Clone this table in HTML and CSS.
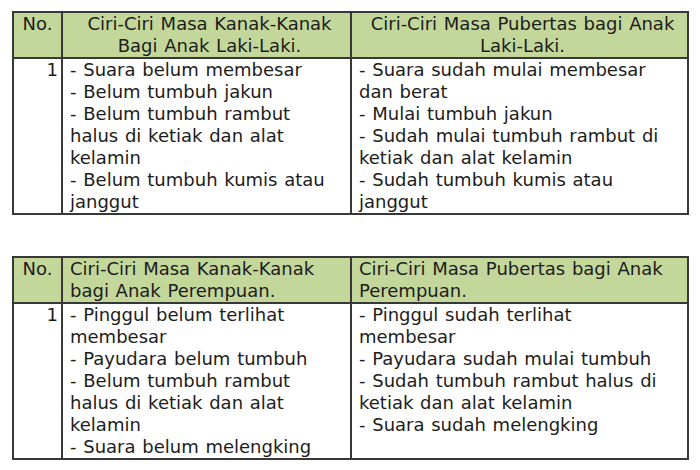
FILE: index.html
```html
<!DOCTYPE html>
<html lang="id">
<head>
<meta charset="utf-8">
<link rel="stylesheet" href="styles.css">
</head>
<body>
<div class="page">
  <table class="tbl tbl-center">
    <colgroup><col class="c-no"><col class="c-a"><col class="c-b"></colgroup>
    <thead>
      <tr>
        <th class="no">No.</th>
        <th>Ciri-Ciri Masa Kanak-Kanak<br>Bagi Anak Laki-Laki.</th>
        <th>Ciri-Ciri Masa Pubertas bagi Anak<br>Laki-Laki.</th>
      </tr>
    </thead>
    <tbody>
      <tr>
        <td class="num">1</td>
        <td>- Suara belum membesar<br>- Belum tumbuh jakun<br>- Belum tumbuh rambut<br>halus di ketiak dan alat<br>kelamin<br>- Belum tumbuh kumis atau<br>janggut</td>
        <td>- Suara sudah mulai membesar<br>dan berat<br>- Mulai tumbuh jakun<br>- Sudah mulai tumbuh rambut di<br>ketiak dan alat kelamin<br>- Sudah tumbuh kumis atau<br>janggut</td>
      </tr>
    </tbody>
  </table>

  <table class="tbl tbl-left">
    <colgroup><col class="c-no"><col class="c-a"><col class="c-b"></colgroup>
    <thead>
      <tr>
        <th class="no">No.</th>
        <th>Ciri-Ciri Masa Kanak-Kanak<br>bagi Anak Perempuan.</th>
        <th>Ciri-Ciri Masa Pubertas bagi Anak<br>Perempuan.</th>
      </tr>
    </thead>
    <tbody>
      <tr>
        <td class="num">1</td>
        <td>- Pinggul belum terlihat<br>membesar<br>- Payudara belum tumbuh<br>- Belum tumbuh rambut<br>halus di ketiak dan alat<br>kelamin<br>- Suara belum melengking</td>
        <td>- Pinggul sudah terlihat<br>membesar<br>- Payudara sudah mulai tumbuh<br>- Sudah tumbuh rambut halus di<br>ketiak dan alat kelamin<br>- Suara sudah melengking</td>
      </tr>
    </tbody>
  </table>
</div>
</body>
</html>
```

FILE: styles.css
```css
html, body {
  margin: 0;
  padding: 0;
  background: #ffffff;
}

.page {
  padding: 11px 0 0 12px;
  display: flex;
  flex-direction: column;
  gap: 41px;
  font-family: "DejaVu Sans", Verdana, sans-serif;
  font-size: 18px;
  word-spacing: 1px;
  color: #1c1c1c;
}

.tbl {
  border-collapse: collapse;
  table-layout: fixed;
  width: 675px;
}

.c-no { width: 49px; }
.c-a { width: 289px; }
.c-b { width: 337px; }

.tbl th,
.tbl td {
  border: 2px solid #383838;
  line-height: 22px;
  height: 22px;
  padding: 0 1px 0 7px;
  vertical-align: top;
  font-weight: normal;
  white-space: nowrap;
  overflow: hidden;
}

.tbl th {
  background: #c4d79b;
}

.tbl-center th {
  text-align: center;
}

.tbl-left th {
  text-align: left;
}

.tbl th.no {
  text-align: center;
  padding: 0 2px;
}

.tbl td {
  text-align: left;
  height: 154px;
}

.tbl td.num {
  text-align: right;
  padding: 0 3px 0 0;
}
```
